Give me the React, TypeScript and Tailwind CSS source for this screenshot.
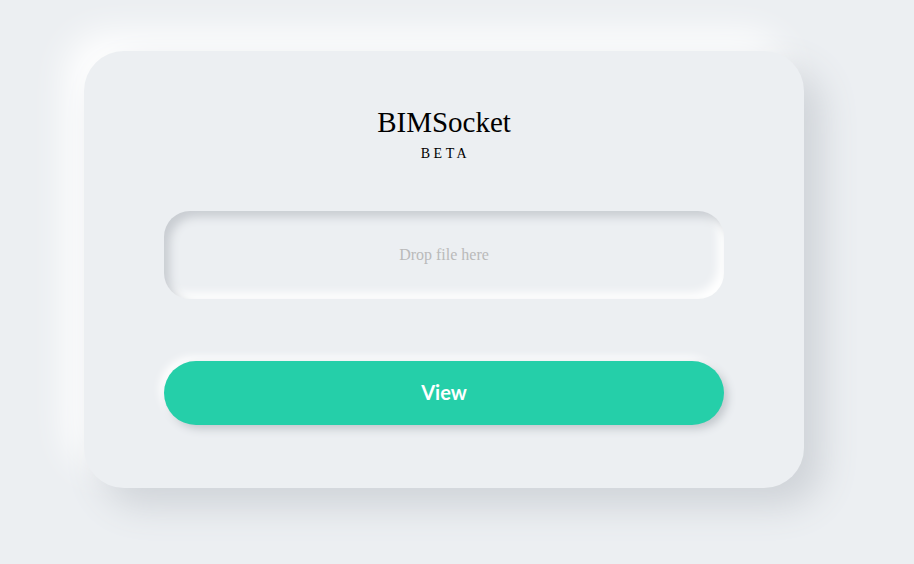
export default function App() {
  return (
    <div className="min-h-[564px] w-full bg-[#eceff2] pl-[84px] pt-[51px]">
      <div className="flex w-[720px] flex-col items-center rounded-[40px] bg-[#eceff2] px-[80px] pt-[55px] pb-[63px] shadow-[18px_18px_36px_#cfd3d8,-18px_-18px_36px_#ffffff]">
        <h1 className="text-[29px] leading-[33px] text-black [font-family:'Liberation_Serif',serif]">
          BIMSocket
        </h1>
        <div className="mt-[6px] pl-[3px] text-[14px] leading-[17px] tracking-[3.5px] text-black [font-family:'Liberation_Serif',serif]">
          BETA
        </div>
        <div className="mt-[49px] flex h-[88px] w-[560px] items-center justify-center rounded-[26px] bg-[#eceff2] shadow-[inset_6px_6px_10px_#c9cdd2,inset_-6px_-6px_10px_#ffffff]">
          <span className="text-[16px] text-[#bababa] [font-family:'Liberation_Serif',serif]">
            Drop file here
          </span>
        </div>
        <button className="mt-[62px] flex h-[64px] w-[560px] items-center justify-center rounded-full bg-[#25cfa9] pb-[3px] text-[20px] font-bold text-white shadow-[4px_4px_8px_#c3c8cd,-4px_-4px_8px_#ffffff] [font-family:Lato,sans-serif]">
          View
        </button>
      </div>
    </div>
  );
}
